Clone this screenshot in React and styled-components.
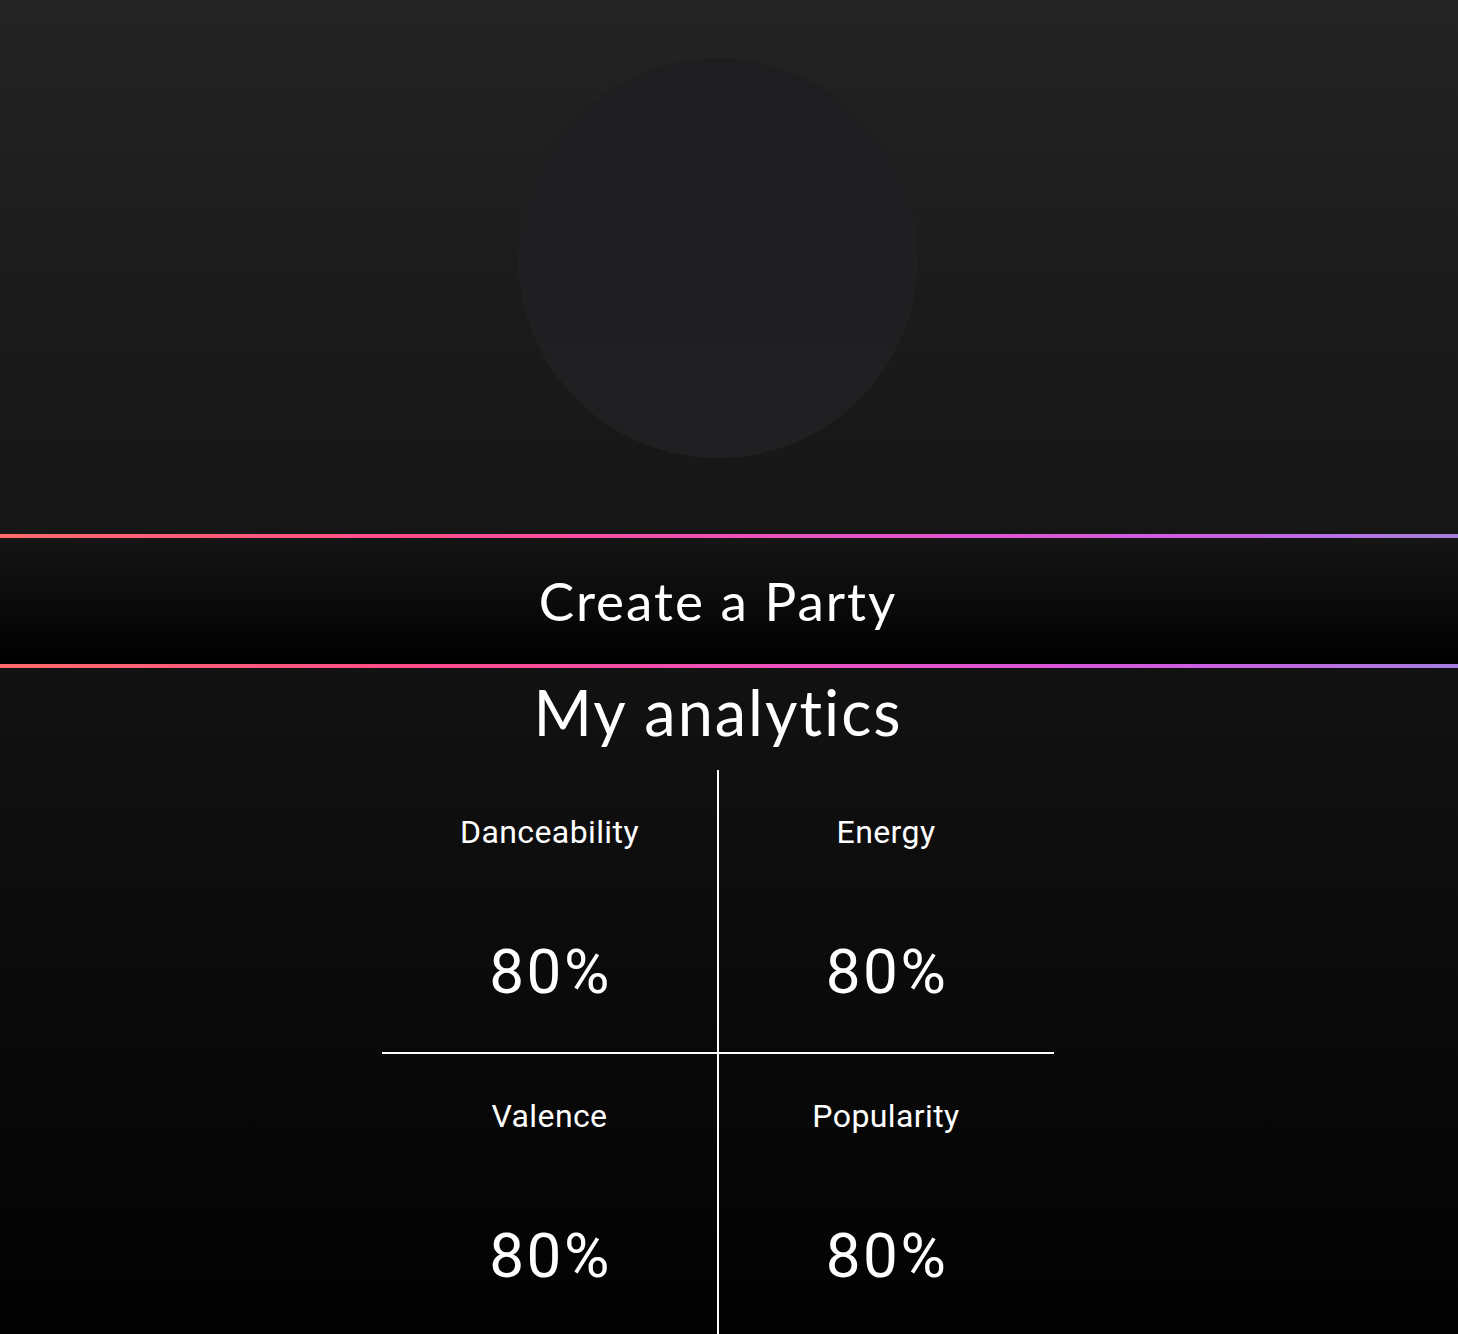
import React from "react";
import styled, { createGlobalStyle } from "styled-components";

const Global = createGlobalStyle`
  html, body { margin: 0; padding: 0; background: #000; }
  body { font-family: Roboto, "Liberation Sans", sans-serif; color: #fff; }
  * { box-sizing: border-box; }
`;

const Page = styled.div`
  width: 100%;
  display: flex;
  flex-direction: column;
`;

const Hero = styled.section`
  height: 534px;
  display: flex;
  justify-content: center;
  align-items: flex-start;
  padding: 58px 22px 0 0;
  background: linear-gradient(180deg, #242424 0%, #1b1b1b 55%, #161616 100%);
`;

const Cover = styled.div`
  width: 400px;
  height: 400px;
  border-radius: 50%;
  background: linear-gradient(180deg, #1e1d20 0%, #201f22 100%);
`;

const Rule = styled.div`
  height: 4px;
  background: linear-gradient(90deg, #ff6b6b 0%, #ff4d8a 28%, #f050b2 48%, #dd57d6 70%, #cc5fe0 82%, #a57fe0 100%);
`;

const Band = styled.section`
  height: 126px;
  display: flex;
  align-items: center;
  justify-content: center;
  padding-right: 22px;
  background: linear-gradient(180deg, #151515 0%, #0a0a0a 55%, #000 100%);
`;

const Heading = styled.h1`
  margin: 0;
  font-family: Lato, "Noto Sans", sans-serif;
  font-weight: 400;
  font-size: ${(p) => p.$size}px;
  line-height: 1.2;
  color: #fff;
  letter-spacing: 2px;
`;

const Analytics = styled.section`
  display: flex;
  flex-direction: column;
  align-items: center;
  padding: 6px 22px 0 0;
  background: linear-gradient(180deg, #121212 0%, #0a0a0a 50%, #020202 100%);
`;

const TitleWrap = styled.div`
  height: 96px;
  display: flex;
  align-items: flex-start;
  justify-content: center;
`;

const Grid = styled.div`
  width: 672px;
  display: grid;
  grid-template-columns: 1fr 1fr;
`;

const Cell = styled.div`
  height: ${(p) => (p.$top ? 284 : 282)}px;
  display: flex;
  flex-direction: column;
  align-items: center;
  padding-top: 44px;
  border-right: ${(p) => (p.$left ? "2px solid #fff" : "none")};
  margin-right: ${(p) => (p.$left ? "-1px" : "0")};
  border-bottom: ${(p) => (p.$top ? "2px solid #fff" : "none")};
`;

const Label = styled.div`
  font-family: Roboto, "Liberation Sans", sans-serif;
  font-size: 32px;
  line-height: 36px;
  font-weight: 400;
  letter-spacing: 0.4px;
  color: #fff;
`;

const Value = styled.div`
  margin-top: 86px;
  padding-left: 2px;
  font-family: Roboto, "Liberation Sans", sans-serif;
  font-size: 62px;
  line-height: 72px;
  font-weight: 400;
  letter-spacing: 2.5px;
  color: #fff;
`;

const stats = [
  { label: "Danceability", value: 80 },
  { label: "Energy", value: 80 },
  { label: "Valence", value: 80 },
  { label: "Popularity", value: 80 },
];

export default function App() {
  return (
    <Page>
      <Global />
      <Hero>
        <Cover />
      </Hero>
      <Rule />
      <Band>
        <Heading $size={53}>Create a Party</Heading>
      </Band>
      <Rule />
      <Analytics>
        <TitleWrap>
          <Heading $size={63}>My analytics</Heading>
        </TitleWrap>
        <Grid>
          {stats.map((s, i) => (
            <Cell key={s.label} $left={i % 2 === 0} $top={i < 2}>
              <Label>{s.label}</Label>
              <Value>{s.value}%</Value>
            </Cell>
          ))}
        </Grid>
      </Analytics>
    </Page>
  );
}
